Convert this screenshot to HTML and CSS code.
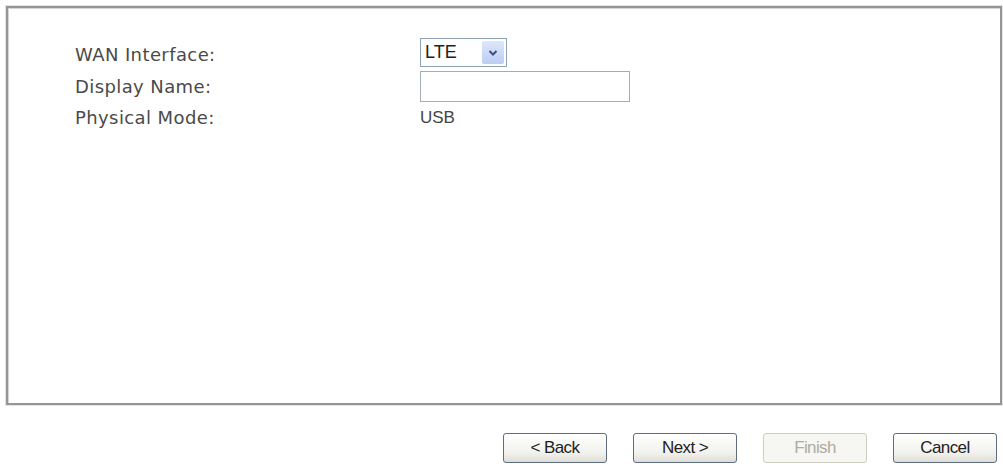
FILE: index.html
```html
<!DOCTYPE html>
<html>
<head>
  <title>WAN Setup</title>
  <link rel="stylesheet" href="styles.css">
</head>
<body>
  <div class="panel">
    <div class="fields">
      <label class="label">WAN Interface:</label>
      <div class="select">
        <span class="select-text">LTE</span>
        <span class="select-arrow">
          <svg width="10" height="8" viewBox="0 0 10 8">
            <path d="M1.5 2 L5 5.5 L8.5 2" fill="none" stroke="#3b4f86" stroke-width="2"/>
          </svg>
        </span>
      </div>
      <label class="label">Display Name:</label>
      <input type="text" class="text-input">
      <label class="label">Physical Mode:</label>
      <span class="value">USB</span>
    </div>
  </div>

  <div class="actions">
    <button type="button" class="btn">&lt; Back</button>
    <button type="button" class="btn">Next &gt;</button>
    <button type="button" class="btn" disabled>Finish</button>
    <button type="button" class="btn">Cancel</button>
  </div>
</body>
</html>
```

FILE: styles.css
```css
body {
  margin: 0;
  background-color: white;
  font-family: "DejaVu Sans", Verdana, sans-serif;
}

.panel {
  margin: 6px 1px 0 6px;
  border: 2px solid #959595;
  box-shadow: inset 1px 1px 0 #d4d4d4, 0 0 0 1px #e4e4e4;
  padding: 30px 0 0 67px;
  height: 365px;
}

.fields {
  display: grid;
  grid-template-columns: 345px auto;
  row-gap: 4px;
  align-items: center;
}

.label {
  font-size: 18px;
  letter-spacing: 0.4px;
  color: #4a4a4a;
}

.label:first-child {
  padding-top: 4px;
}

.select {
  width: 87px;
  height: 29px;
  box-sizing: border-box;
  border: 1px solid #8ea2b8;
  display: flex;
  align-items: center;
  justify-content: space-between;
  padding: 2px;
  background-color: white;
}

.select-text {
  font-family: "Liberation Sans", Arial, sans-serif;
  font-size: 18px;
  color: #222;
  padding-left: 2px;
}

.select-arrow {
  width: 22px;
  height: 23px;
  display: flex;
  align-items: center;
  justify-content: center;
  background: linear-gradient(#dde7fb, #bccdf3);
  border-radius: 2px;
}

.text-input {
  width: 210px;
  height: 31px;
  box-sizing: border-box;
  border: 1px solid #a4adb4;
  margin: 0;
  padding: 2px 4px;
}

.value {
  font-family: "Liberation Sans", Arial, sans-serif;
  font-size: 17px;
  color: #444;
  padding-top: 2px;
}

.actions {
  display: flex;
  justify-content: flex-end;
  gap: 26px;
  margin: 28px 6px 0 0;
}

.btn {
  width: 104px;
  height: 30px;
  border: 1px solid #5d6e80;
  border-radius: 3px;
  background: linear-gradient(#ffffff, #f1f1ec 70%, #dedcd4);
  font-family: "Liberation Sans", Arial, sans-serif;
  font-size: 17px;
  letter-spacing: -0.6px;
  color: #222;
  padding: 0;
}

.btn:disabled {
  border-color: #cfcdc2;
  background: #f6f6f2;
  color: #aeaca2;
}
```
